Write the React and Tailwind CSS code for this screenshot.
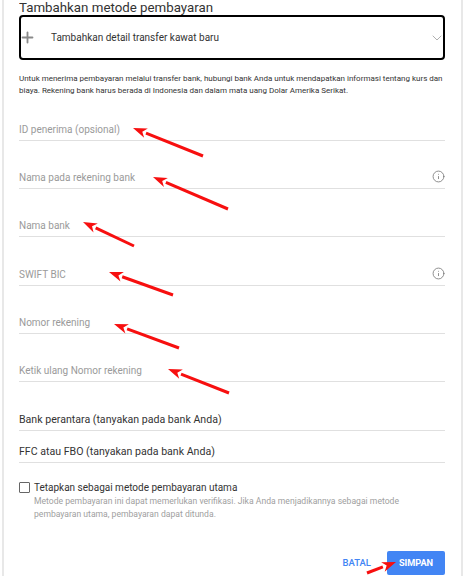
import React from "react";
import { Plus, ChevronDown, Info } from "lucide-react";

const fields = [
  { label: "ID penerima (opsional)", h: "h-[48px]" },
  { label: "Nama pada rekening bank", h: "h-[48px]", info: true },
  { label: "Nama bank", h: "h-[48px]" },
  { label: "SWIFT BIC", h: "h-[49px]", info: true },
  { label: "Nomor rekening", h: "h-[48px]" },
  { label: "Ketik ulang Nomor rekening", h: "h-[48px]" },
];

// tip x, tip y, tail x, tail y
const arrows = [
  [133, 128, 203, 156],
  [153, 177, 228, 209],
  [83, 222, 134, 246],
  [109, 272, 173, 295],
  [114, 324, 179, 348],
  [168, 369, 229, 393],
  [396, 562, 367, 573],
];

const Arrow = ({ a }) => {
  const [x1, y1, x2, y2] = a;
  const len = Math.hypot(x2 - x1, y2 - y1);
  const ux = (x2 - x1) / len;
  const uy = (y2 - y1) / len;
  const bx = x1 + ux * 14;
  const by = y1 + uy * 14;
  const nx = -uy * 5;
  const ny = ux * 5;
  return (
    <g>
      <line x1={bx} y1={by} x2={x2} y2={y2} stroke="#f70f0f" strokeWidth="3" />
      <polygon
        points={`${x1},${y1} ${bx + nx},${by + ny} ${x1 + ux * 10},${y1 + uy * 10} ${bx - nx},${by - ny}`}
        fill="#f70f0f"
      />
    </g>
  );
};

const Field = ({ label, h, info }) => (
  <div className={`${h} flex items-end border-b border-[#e0e0e0]`}>
    <div className="flex w-full items-center justify-between pb-[3px]">
      <span className="text-[10px] leading-[14px] text-[#9a9a9a]">{label}</span>
      {info && <Info size={13} strokeWidth={1.5} className="mb-[2px] text-[#757575]" />}
    </div>
  </div>
);

const App = () => {
  return (
    <div className="relative h-[576px] w-[465px] overflow-hidden bg-white font-['Roboto',sans-serif]">
      <div className="mx-[2px] h-full border-x-2 border-[#e8e8e8] pl-[15px] pr-[16px]">
        <h1 className="h-[15px] overflow-hidden text-[13.3px] leading-[16px] text-[#333]">
          Tambahkan metode pembayaran
        </h1>
        <div className="flex h-[45px] items-center rounded-[4px] border-2 border-black">
          <Plus size={17} strokeWidth={2.6} className="-ml-[2px] text-[#8a8a8a]" />
          <span className="ml-[15px] text-[10px] text-[#333]">Tambahkan detail transfer kawat baru</span>
          <ChevronDown size={16} strokeWidth={1.5} className="-mr-[2px] ml-auto text-[#b0b0b0]" />
        </div>
        <p className="mt-[13px] text-[8px] leading-[11.5px] text-[#333]">
          Untuk menerima pembayaran melalui transfer bank, hubungi bank Anda untuk mendapatkan informasi tentang kurs dan biaya. Rekening bank harus berada di Indonesia dan dalam mata uang Dolar Amerika Serikat.
        </p>
        <div className="-mt-[3px]">
          {fields.map((f) => (
            <Field key={f.label} {...f} />
          ))}
          <div className="flex h-[49px] items-end border-b border-[#e0e0e0] pb-[3px] text-[10.6px] leading-[14px] text-[#333]">
            Bank perantara (tanyakan pada bank Anda)
          </div>
          <div className="flex h-[32px] items-end border-b border-[#e0e0e0] pb-[3px] text-[10.6px] leading-[14px] text-[#333]">
            FFC atau FBO (tanyakan pada bank Anda)
          </div>
        </div>
        <div className="mt-[19px] flex items-start">
          <div className="h-[11px] w-[11px] rounded-[1px] border border-[#666]" />
          <div className="ml-[4px]">
            <div className="text-[10px] leading-[12px] text-[#333]">Tetapkan sebagai metode pembayaran utama</div>
            <div className="mt-[1px] w-[400px] text-[8.6px] leading-[12.5px] text-[#a0a0a0]">
              Metode pembayaran ini dapat memerlukan verifikasi. Jika Anda menjadikannya sebagai metode pembayaran utama, pembayaran dapat ditunda.
            </div>
          </div>
        </div>
        <div className="mt-[31px] flex items-center justify-end">
          <span className="mr-[16px] text-[9.5px] font-medium text-[#4285f4]">BATAL</span>
          <div className="flex h-[24px] w-[58px] items-center justify-center rounded-[2px] bg-[#4285f4] text-[9.2px] font-bold text-white">SIMPAN</div>
        </div>
      </div>
      <svg className="pointer-events-none absolute left-0 top-0" width="465" height="576">
        {arrows.map((a, i) => (
          <Arrow key={i} a={a} />
        ))}
      </svg>
    </div>
  );
};

export default App;
